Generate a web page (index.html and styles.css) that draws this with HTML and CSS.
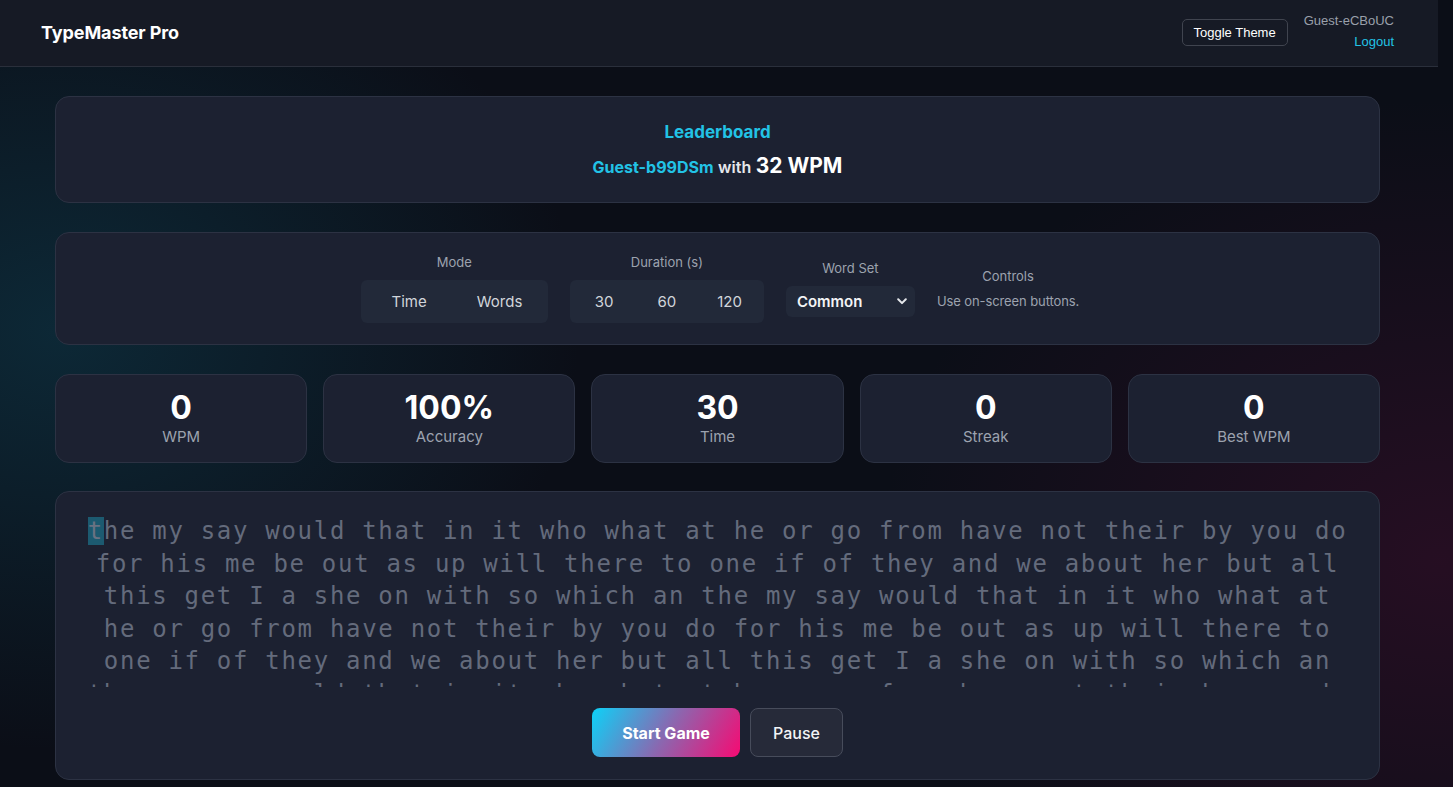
FILE: index.html
```html
<!DOCTYPE html>
<html lang="en">
<head>
<meta charset="utf-8">
<title>TypeMaster Pro</title>
<link rel="stylesheet" href="styles.css">
</head>
<body>
<div class="page">
  <header class="topbar">
    <div class="brand">TypeMaster Pro</div>
    <div class="top-right">
      <button class="theme-btn">Toggle Theme</button>
      <div class="user">
        <span class="user-name">Guest-eCBoUC</span>
        <a class="logout">Logout</a>
      </div>
    </div>
  </header>

  <main class="main">
    <section class="card leaderboard">
      <div class="lb-title">Leaderboard</div>
      <div class="lb-entry"><span class="lb-name">Guest-b99DSm</span> <span class="lb-with">with</span> <span class="lb-score">32 WPM</span></div>
    </section>

    <section class="card settings">
      <div class="setting">
        <div class="setting-label">Mode</div>
        <div class="seg seg-mode">
          <button>Time</button>
          <button>Words</button>
        </div>
      </div>
      <div class="setting">
        <div class="setting-label">Duration (s)</div>
        <div class="seg seg-dur">
          <button>30</button>
          <button>60</button>
          <button>120</button>
        </div>
      </div>
      <div class="setting">
        <div class="setting-label">Word Set</div>
        <div class="select">
          <span>Common</span>
          <svg width="10" height="7" viewBox="0 0 10 7"><path d="M1.2 1.3 L5 5.1 L8.8 1.3" fill="none" stroke="#e5e7eb" stroke-width="2" stroke-linecap="round" stroke-linejoin="round"/></svg>
        </div>
      </div>
      <div class="setting controls">
        <div class="setting-label">Controls</div>
        <div class="controls-text">Use on-screen buttons.</div>
      </div>
    </section>

    <section class="stats">
      <div class="card stat"><div class="stat-num">0</div><div class="stat-label">WPM</div></div>
      <div class="card stat"><div class="stat-num">100%</div><div class="stat-label">Accuracy</div></div>
      <div class="card stat"><div class="stat-num">30</div><div class="stat-label">Time</div></div>
      <div class="card stat"><div class="stat-num">0</div><div class="stat-label">Streak</div></div>
      <div class="card stat"><div class="stat-num">0</div><div class="stat-label">Best WPM</div></div>
    </section>

    <section class="card typing">
      <div class="words"><span class="cursor">t</span>he my say would that in it who what at he or go from have not their by you do for his me be out as up will there to one if of they and we about her but all this get I a she on with so which an the my say would that in it who what at he or go from have not their by you do for his me be out as up will there to one if of they and we about her but all this get I a she on with so which an the my say would that in it who what at he or go from have not their by you do for his me be out as up will there to one if of they and we about her but all this get I a she on with so which an</div>
      <div class="actions">
        <button class="btn-start">Start Game</button>
        <button class="btn-pause">Pause</button>
      </div>
    </section>
  </main>
</div>
</body>
</html>
```

FILE: styles.css
```css
* { box-sizing: border-box; }
html, body { margin: 0; padding: 0; }
body {
  font-family: Inter, "Noto Sans", sans-serif;
  color: #e5e7eb;
  min-height: 787px;
  background:
    radial-gradient(ellipse 520px 420px at 60px 330px, rgba(14, 62, 80, 0.55), rgba(14, 62, 80, 0) 100%),
    radial-gradient(ellipse 560px 460px at 1440px 560px, rgba(70, 14, 48, 0.45), rgba(70, 14, 48, 0) 100%),
    #0b0e17;
  overflow: hidden;
}
.page { width: 1438px; }

.topbar {
  height: 67px;
  background: #161a25;
  border-bottom: 1px solid #2a2f3b;
  display: flex;
  align-items: center;
  justify-content: space-between;
  padding: 0 44px 2px 41px;
}
.brand { font-weight: 700; font-size: 18px; color: #ffffff; letter-spacing: -0.1px; }
.top-right { display: flex; align-items: center; gap: 16px; }
.theme-btn {
  font-family: "Liberation Sans", Arial, sans-serif;
  font-size: 13px;
  color: #ffffff;
  background: transparent;
  border: 1px solid #40444f;
  border-radius: 5px;
  height: 27px;
  padding: 0 11px;
}
.user {
  display: flex;
  flex-direction: column;
  align-items: flex-end;
  font-family: "Liberation Sans", Arial, sans-serif;
  font-size: 13px;
  line-height: 15px;
  gap: 6px;
  margin-top: -3px;
}
.user-name { color: #9aa0ab; }
.logout { color: #22c3e6; }

.main {
  width: 1325px;
  margin-left: 55px;
  padding-top: 29px;
}
.card {
  background: #1c2131;
  border: 1px solid #2c3243;
  border-radius: 14px;
}

.leaderboard {
  height: 107px;
  padding-top: 23px;
  text-align: center;
}
.lb-title { color: #22c3e6; font-weight: 700; font-size: 17px; line-height: 24px; }
.lb-entry { margin-top: 8px; line-height: 28px; font-size: 16px; }
.lb-name { color: #22c3e6; font-weight: 700; }
.lb-with { color: #e5e7eb; font-weight: 600; }
.lb-score { color: #ffffff; font-weight: 700; font-size: 21px; }

.settings {
  margin-top: 29px;
  height: 113px;
  display: flex;
  justify-content: center;
  align-items: center;
  gap: 22px;
  padding-left: 5px;
}
.setting { display: flex; flex-direction: column; align-items: center; }
.setting-label { font-size: 13px; line-height: 16px; color: #9ca3af; margin-bottom: 10px; }
.seg {
  display: flex;
  background: #222939;
  border-radius: 6px;
  padding: 0 3px;
  height: 43px;
}
.seg button {
  font-family: Inter, sans-serif;
  font-size: 15px;
  color: #d1d5db;
  background: transparent;
  border: 0;
  padding: 0;
}
.seg-mode button { width: 90.5px; }
.seg-dur button { width: 62.7px; }
.select {
  width: 129px;
  height: 31px;
  background: #222939;
  border-radius: 6px;
  display: flex;
  align-items: center;
  justify-content: space-between;
  padding: 0 8px 0 11px;
  font-size: 15px;
  font-weight: 600;
  color: #f3f4f6;
}
.controls .setting-label { margin-bottom: 9px; }
.controls-text { font-size: 13px; line-height: 16px; color: #9ca3af; letter-spacing: -0.1px; }

.stats {
  margin-top: 29px;
  display: grid;
  grid-template-columns: repeat(5, 1fr);
  gap: 16px;
}
.stat {
  height: 89px;
  padding-top: 14px;
  text-align: center;
}
.stat-num { font-size: 32px; font-weight: 700; color: #ffffff; line-height: 38px; }
.stat-label { font-size: 15px; color: #9ca3af; line-height: 18px; margin-top: 1px; }

.typing {
  margin-top: 28px;
  height: 289px;
  padding: 23px 30px 22px;
}
.words {
  height: 172px;
  overflow: hidden;
  text-align: center;
  font-family: "DejaVu Sans Mono", "Liberation Mono", monospace;
  font-size: 24px;
  letter-spacing: 1.7px;
  line-height: 32.5px;
  color: #646b7c;
}
.cursor { background: #1c5a70; color: #6a7282; }
.actions {
  margin-top: 21px;
  display: flex;
  justify-content: center;
  gap: 10px;
}
.btn-start {
  width: 148px;
  height: 49px;
  border: 0;
  border-radius: 8px;
  background: linear-gradient(120deg, #0cd2f8 0%, #8a68b0 50%, #f70a72 100%);
  color: #ffffff;
  font-family: Inter, sans-serif;
  font-size: 16px;
  font-weight: 700;
}
.btn-pause {
  width: 93px;
  height: 49px;
  border: 1px solid #474c5b;
  border-radius: 8px;
  background: #262a39;
  color: #f3f4f6;
  font-family: Inter, sans-serif;
  font-size: 16px;
  font-weight: 500;
}
```
